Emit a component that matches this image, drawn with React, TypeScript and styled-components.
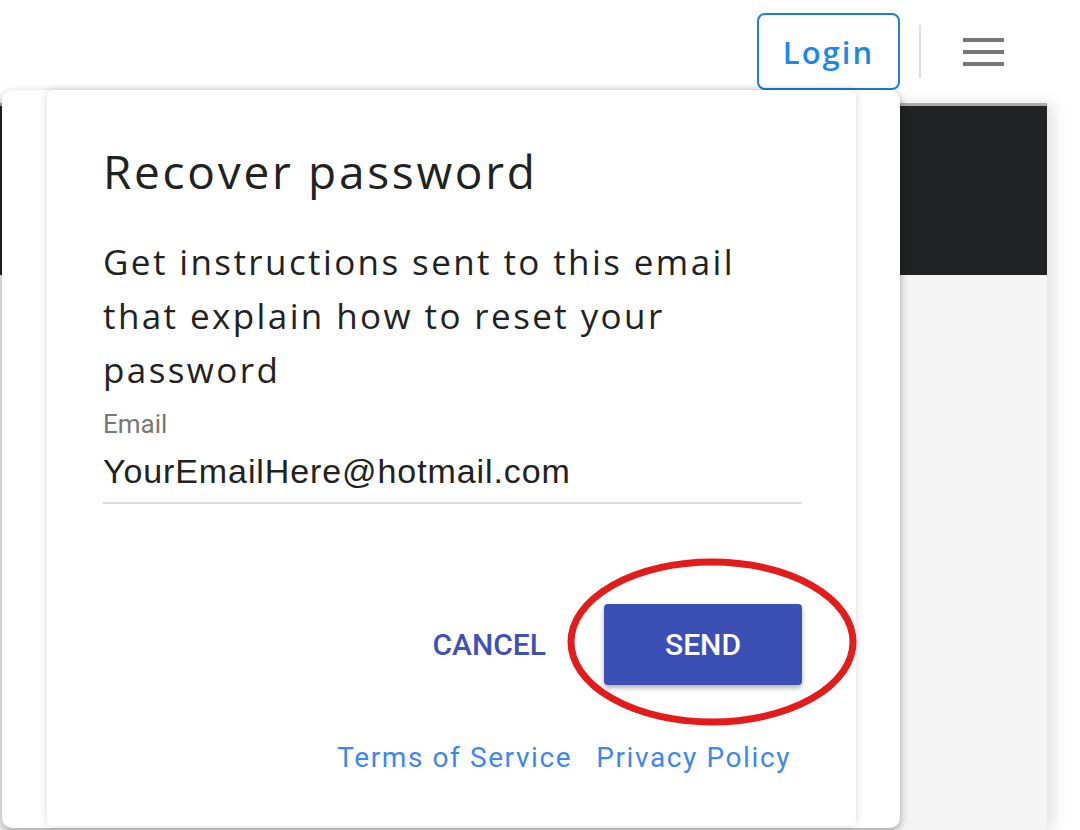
import styled, { createGlobalStyle } from "styled-components";

const GlobalStyle = createGlobalStyle`
  html, body {
    margin: 0;
    padding: 0;
    background: #ffffff;
  }
  * {
    box-sizing: border-box;
  }
`;

const Page = styled.div`
  position: relative;
  width: 1080px;
  height: 830px;
  overflow: hidden;
  background: #ffffff;
  font-family: "Open Sans", "Liberation Sans", sans-serif;
`;

const Header = styled.header`
  height: 103px;
  display: flex;
  align-items: center;
  justify-content: flex-end;
  padding-right: 76px;
`;

const LoginButton = styled.button`
  width: 143px;
  height: 77px;
  border: 2px solid #1e7fdb;
  border-radius: 8px;
  background: #ffffff;
  color: #1e88e5;
  font-family: "Open Sans", sans-serif;
  font-size: 31px;
  font-weight: 600;
  letter-spacing: 2px;
  cursor: pointer;
`;

const Divider = styled.div`
  width: 2px;
  height: 53px;
  background: #dddddd;
  margin: 0 42px 0 19px;
`;

const MenuIcon = styled.svg`
  display: block;
`;

const Backdrop = styled.main`
  width: 1047px;
  height: 727px;
  display: flex;
  flex-direction: column;
  box-shadow: 6px 0 14px rgba(0, 0, 0, 0.12);
`;

const Banner = styled.div`
  height: 172px;
  background: #212224;
  border-top: 3px solid #aaaaaa;
`;

const Surface = styled.div`
  flex: 1;
  background: #f4f4f4;
`;

const Dialog = styled.div`
  position: absolute;
  left: 2px;
  top: 90px;
  width: 898px;
  height: 738px;
  background: #ffffff;
  border-radius: 10px;
  box-shadow: 0 3px 8px rgba(0, 0, 0, 0.35);
  padding: 0 44px 2px 45px;
  display: flex;
`;

const Card = styled.section`
  position: relative;
  flex: 1;
  background: #ffffff;
  border-radius: 6px;
  box-shadow: 0 0 8px rgba(0, 0, 0, 0.16);
  padding: 51px 54px 0 56px;
  display: flex;
  flex-direction: column;
`;

const Title = styled.h1`
  margin: 0;
  font-family: "Open Sans", sans-serif;
  font-size: 46px;
  font-weight: 500;
  color: #222222;
  line-height: 60px;
  letter-spacing: 2.7px;
`;

const Description = styled.p`
  margin: 34px 0 0;
  max-width: 680px;
  font-family: "Open Sans", sans-serif;
  font-size: 35px;
  line-height: 54px;
  color: #222222;
  letter-spacing: 2.4px;
`;

const Field = styled.label`
  display: flex;
  flex-direction: column;
  margin-top: 11px;
  border-bottom: 2px solid #dddddd;
`;

const FieldLabel = styled.span`
  font-family: "Roboto", sans-serif;
  font-size: 26px;
  line-height: 32px;
  color: #777777;
`;

const FieldInput = styled.input`
  border: none;
  outline: none;
  padding: 0;
  margin: 0;
  height: 62px;
  font-family: "Liberation Sans", Arial, sans-serif;
  font-size: 34px;
  letter-spacing: 0.9px;
  color: #222222;
  background: transparent;
`;

const Actions = styled.div`
  display: flex;
  justify-content: flex-end;
  align-items: center;
  gap: 58px;
  margin-top: 100px;
`;

const TextButton = styled.button`
  border: none;
  background: none;
  padding: 0;
  font-family: "Roboto", sans-serif;
  font-size: 30px;
  font-weight: 500;
  color: #3f51b5;
  cursor: pointer;
`;

const PrimaryButton = styled.button`
  width: 198px;
  height: 81px;
  border: none;
  border-radius: 4px;
  background: #3b4fb4;
  color: #ffffff;
  font-family: "Roboto", sans-serif;
  font-size: 30px;
  font-weight: 500;
  box-shadow: 0 3px 5px rgba(0, 0, 0, 0.3);
  cursor: pointer;
`;

const Links = styled.nav`
  display: flex;
  justify-content: flex-end;
  gap: 24px;
  margin-top: 56px;
  padding-right: 11px;
`;

const Link = styled.a`
  font-family: "Roboto", sans-serif;
  font-size: 28px;
  color: #3d87f3;
  letter-spacing: 1.6px;
  text-decoration: none;
`;

const Highlight = styled.svg`
  position: absolute;
  left: 519px;
  top: 468px;
  pointer-events: none;
`;

export default function App() {
  return (
    <Page>
      <GlobalStyle />
      <Header>
        <LoginButton>Login</LoginButton>
        <Divider />
        <MenuIcon width="41" height="28" viewBox="0 0 41 28">
          <rect x="0" y="0" width="41" height="4" fill="#777777" />
          <rect x="0" y="12" width="41" height="4" fill="#777777" />
          <rect x="0" y="24" width="41" height="4" fill="#777777" />
        </MenuIcon>
      </Header>
      <Backdrop>
        <Banner />
        <Surface />
      </Backdrop>
      <Dialog>
        <Card>
          <Title>Recover password</Title>
          <Description>
            Get instructions sent to this email that explain how to reset your
            password
          </Description>
          <Field>
            <FieldLabel>Email</FieldLabel>
            <FieldInput defaultValue="YourEmailHere@hotmail.com" />
          </Field>
          <Actions>
            <TextButton>CANCEL</TextButton>
            <PrimaryButton>SEND</PrimaryButton>
          </Actions>
          <Links>
            <Link href="#">Terms of Service</Link>
            <Link href="#">Privacy Policy</Link>
          </Links>
          <Highlight width="292" height="170" viewBox="0 0 292 170">
            <ellipse cx="146" cy="84" rx="141" ry="80" fill="none" stroke="#e31b1b" strokeWidth="7" />
          </Highlight>
        </Card>
      </Dialog>
    </Page>
  );
}
